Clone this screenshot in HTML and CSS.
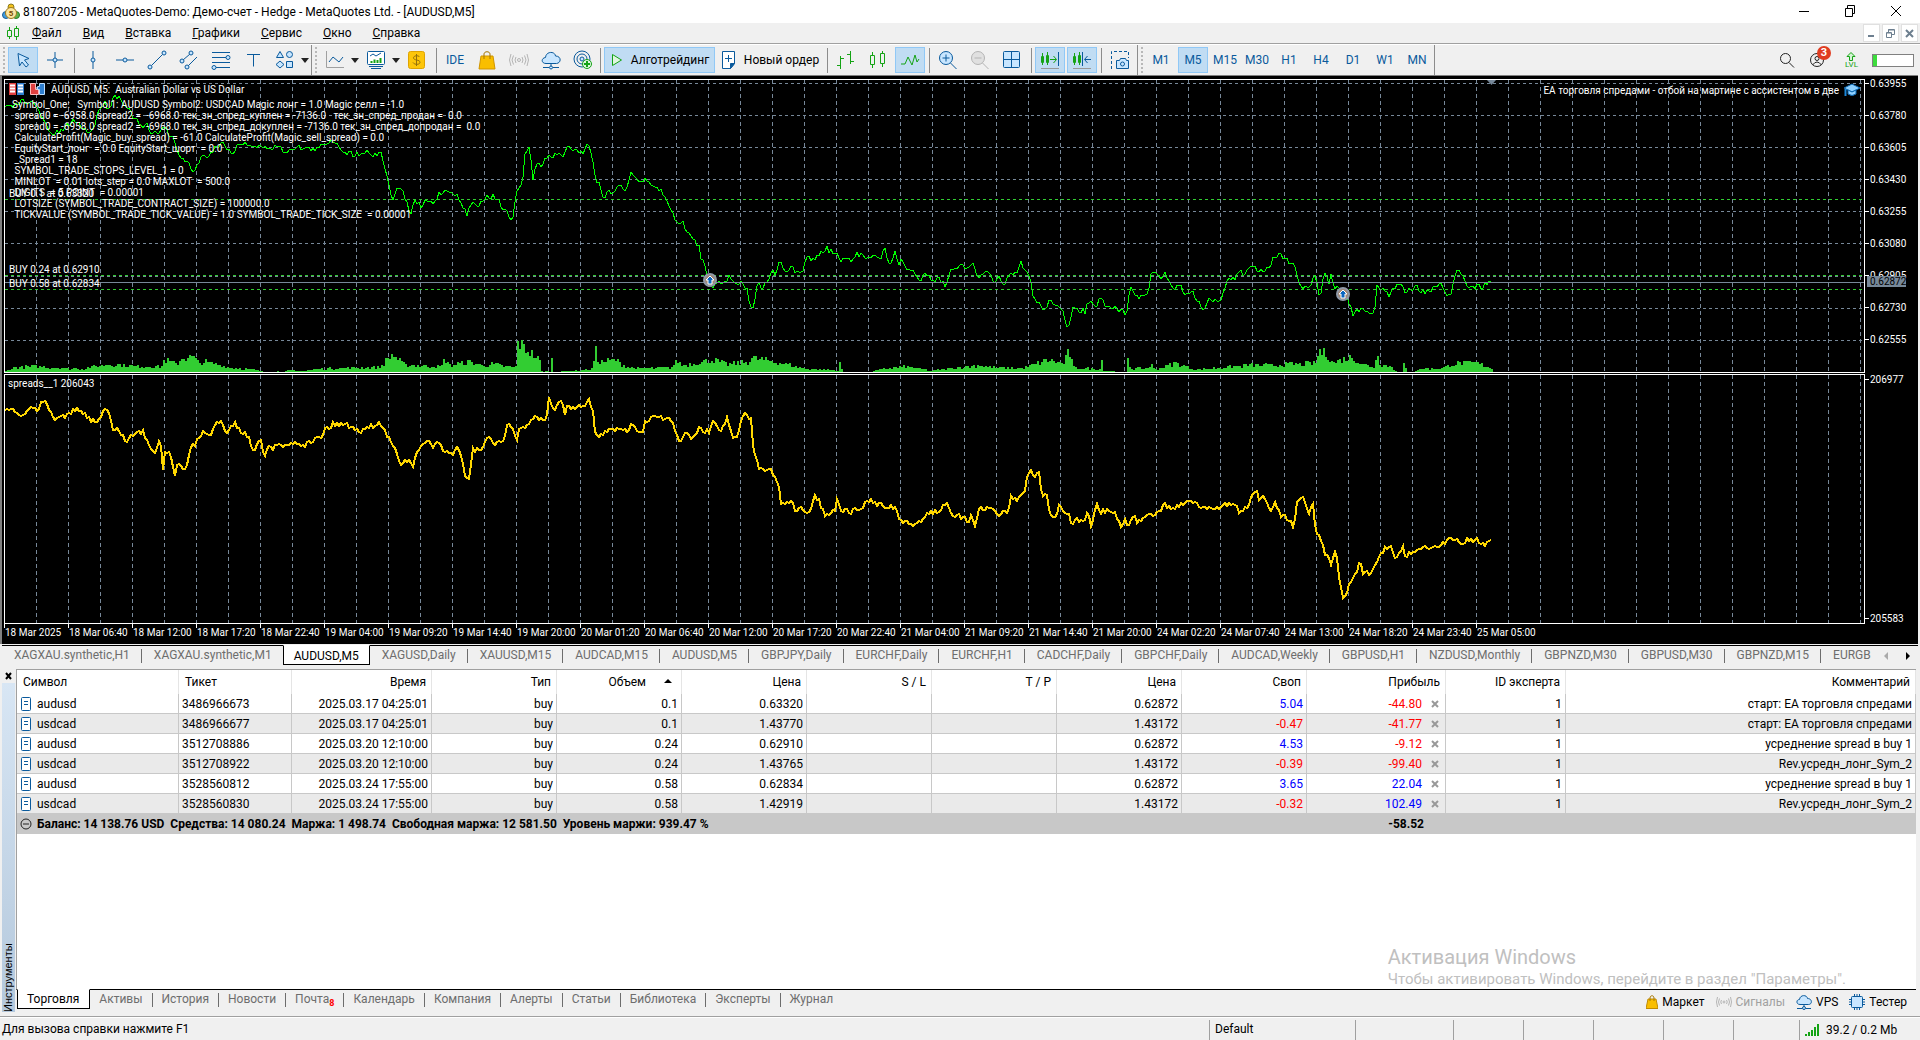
FILE: index.html
```html
<!DOCTYPE html>
<html lang="ru">

<head>
	<meta charset="UTF-8">
	<meta name="viewport" content="width=device-width, initial-scale=1">
	<title>81807205 - MetaQuotes-Demo: Демо-счет - Hedge - MetaQuotes Ltd. - [AUDUSD,M5]</title>
	<link rel="stylesheet" href="styles.css">
</head>

<body>
	<header class="titlebar">
		<svg class="logo" width="18" height="18" viewBox="0 0 18 18">
			<circle cx="9" cy="4" r="3" fill="#f5c21b" stroke="#8a7a20" />
			<circle cx="4" cy="12" r="3.5" fill="#3f9be0" stroke="#1c5f94" />
			<circle cx="14" cy="12" r="3.5" fill="#5ab34a" stroke="#2e7a25" />
			<circle cx="9" cy="10" r="5.5" fill="#fbe6a0" stroke="#a07b1c" />
			<text x="9" y="13" text-anchor="middle" class="logo-num">5</text>
		</svg>
		<span class="title">81807205 - MetaQuotes-Demo: Демо-счет - Hedge - MetaQuotes Ltd. - [AUDUSD,M5]</span>
		<div class="win-btns">
			<button aria-label="Свернуть"><svg width="12" height="12"><path d="M1 6.5h10" stroke="#000" /></svg></button>
			<button aria-label="Развернуть"><svg width="12" height="12" fill="none" stroke="#000"><path d="M1.500 3.500h7v8h-7zM3.500 3.500v-3h7v8h-2" /></svg></button>
			<button aria-label="Закрыть"><svg width="12" height="12"><path d="M1 1l10 10M11 1L1 11" stroke="#000" /></svg></button>
		</div>
	</header>

	<nav class="menubar">
		<svg width="14" height="14" fill="none" stroke="#14a314"><path d="M3.500 1v3M3.500 10v3M1.500 4.500h4v6h-4zM10.500 0v2M10.500 11v3M8.500 2.500h4v8h-4z" /></svg>
		<a href="#"><u>Ф</u>айл</a>
		<a href="#"><u>В</u>ид</a>
		<a href="#"><u>В</u>ставка</a>
		<a href="#"><u>Г</u>рафики</a>
		<a href="#"><u>С</u>ервис</a>
		<a href="#"><u>О</u>кно</a>
		<a href="#"><u>С</u>правка</a>
		<div class="mdi-btns">
			<button aria-label="Свернуть окно"><svg width="9" height="9"><path d="M1 7h6" stroke="#6d7f8f" stroke-width="2" /></svg></button>
			<button aria-label="Восстановить окно"><svg width="9" height="9" fill="none" stroke="#6d7f8f"><path d="M2.500 3V.5h6v5H6M.5 3.500h5v5h-5zM2 1h6M1 4h4" /></svg></button>
			<button aria-label="Закрыть окно"><svg width="9" height="9"><path d="M1 1l7 7M8 1L1 8" stroke="#6d7f8f" stroke-width="2" /></svg></button>
		</div>
	</nav>

	<div class="toolbar">
		<i class="grip"></i>
		<button class="tool on" aria-label="Курсор"><svg width="20" height="20" class="blue"><path d="M5 3.500l11 5-4.500 1.500 4 5-2.500 2-4-5L6.500 16z" class="fill" /></svg></button>
		<button class="tool" aria-label="Перекрестие"><svg width="20" height="20" class="blue"><path d="M10 2v6M10 12v6M2 10h6M12 10h6" /><circle cx="10" cy="10" r="2" class="fill" /></svg></button>
		<i class="sep"></i>
		<button class="tool" aria-label="Вертикальная линия"><svg width="20" height="20" class="blue"><path d="M10 1v7M10 12v7" /><circle cx="10" cy="10" r="2" class="fill" /></svg></button>
		<button class="tool" aria-label="Горизонтальная линия"><svg width="20" height="20" class="blue"><path d="M1 10h7M12 10h7" /><circle cx="10" cy="10" r="2" class="fill" /></svg></button>
		<button class="tool" aria-label="Трендовая линия"><svg width="20" height="20" class="blue"><path d="M4.500 15.500l11-11" /><circle cx="3" cy="17" r="2" class="fill" /><circle cx="17" cy="3" r="2" class="fill" /></svg></button>
		<button class="tool" aria-label="Канал"><svg width="20" height="20" class="blue"><path d="M4 10l7-6M9 16l9-9" /><circle cx="3" cy="11" r="2" class="fill" /><circle cx="12" cy="3" r="2" class="fill" /><circle cx="8" cy="17" r="2" class="fill" /></svg></button>
		<button class="tool" aria-label="Фибоначчи"><svg width="20" height="20" class="blue"><path d="M1 2.500h18M1 7.500h14M1 12.500h18M5 17.500h14" /><circle cx="17" cy="7.500" r="2" class="fill" /><circle cx="3" cy="17.500" r="2" class="fill" /></svg></button>
		<button class="tool" aria-label="Текст"><svg width="20" height="20" class="blue"><path d="M4 4.500h13M10.500 4.500v12" /></svg></button>
		<button class="tool" aria-label="Фигуры"><svg width="20" height="20" class="blue"><path d="M5 1.500l3.500 6h-7z" class="fill" /><circle cx="14.500" cy="4.500" r="3" class="fill" /><path d="M5 11l4 3.500L5 18l-4-3.500zM11.500 11.500h6v6h-6z" class="fill" /></svg></button>
		<button class="drop" aria-label="Ещё фигуры"></button>
		<i class="sep tall"></i><i class="grip"></i>
		<button class="tool" aria-label="Тип графика"><svg width="20" height="20" class="blue"><path d="M1.500 1v16.500H19" stroke="#a0a0a0" /><path d="M4 12l4-5 6 5 4-5" /></svg></button>
		<button class="drop" aria-label="Типы графика"></button>
		<button class="tool" aria-label="Индикаторы"><svg width="20" height="20" class="blue"><rect x="1.500" y="1.500" width="17" height="13" rx="1" fill="#fff" /><path d="M4 6l3-2 3 2 5-3" /><path d="M5.500 13v-2M8.500 13V9.500M11.500 13v-3M14.500 13V8" stroke="#14a314" stroke-width="2" /><path d="M3 16.500h14M5 18.500h10" /></svg></button>
		<button class="drop" aria-label="Список индикаторов"></button>
		<button class="tool" aria-label="Торговля"><svg width="20" height="20"><rect x="1.500" y="1.500" width="16" height="17" rx="2" fill="#fdc60a" stroke="#e0a400" /><path d="M9.500 4v12M12.500 7c-1-2-6-1.500-6 .8 0 3 6.500 1.500 6.500 4.500 0 2.500-5.500 2.800-7 .2" fill="none" stroke="#94700a" /></svg></button>
		<i class="sep"></i>
		<button class="tool tf">IDE</button>
		<button class="tool" aria-label="Маркет"><svg width="20" height="20"><path d="M4 6h12l2 13H2z" fill="#f9be00" stroke="#d09500" /><path d="M7 9V4c0-3 6-3 6 0v5" fill="none" stroke="#a67600" /></svg></button>
		<button class="tool" aria-label="Сигналы"><svg width="20" height="20" fill="none" stroke="#b4b4b4"><circle cx="10" cy="10" r="1.500" /><path d="M7 7q-2 3 0 6M13 7q2 3 0 6M4.500 5.500q-3 4.500 0 9M15.500 5.500q3 4.500 0 9M2 4q-3 6 0 12M18 4q3 6 0 12" /></svg></button>
		<button class="tool" aria-label="VPS"><svg width="20" height="20" class="blue"><path d="M5 13.500c-5 0-5-5.500-.5-6C5 1 14 1 14.500 6c6 0 6 7 1 7.500z" class="fill" /><path d="M10 13v3M2 17.500h6M12 17.500h6" /><circle cx="10" cy="17.500" r="1.500" class="fill" /></svg></button>
		<button class="tool" aria-label="Сообщество"><svg width="20" height="20" class="blue"><circle cx="9" cy="9" r="8" /><circle cx="9" cy="9" r="5" /><circle cx="9" cy="9" r="2" class="fill" /><circle cx="14" cy="14" r="4.500" fill="#dff5df" stroke="#14a314" /><path d="M14 11v6M11 14h6" stroke="#14a314" stroke-width="2" /></svg></button>
		<i class="sep tight"></i>
		<button class="tool wide on"><svg width="14" height="14"><path d="M2.500 1.500l9 5.500-9 5.500z" fill="#dff5df" stroke="#14a314" /></svg>Алготрейдинг</button>
		<button class="tool wide order"><svg width="16" height="20" class="blue"><path d="M1.500 1.500h12v12l-4 5h-8z" fill="#fff" /><path d="M13.500 13.500l-4 5v-5z" fill="#0a5a9c" /><path d="M7.500 5v7M4 8.500h7" /></svg>Новый ордер</button>
		<i class="sep"></i>
		<button class="tool" aria-label="Бары"><svg width="20" height="20" class="green"><path d="M4.500 6v13M1 15.500h3.500M4.500 8.500H8M14.500 1v13M11 4.500h3.500M14.500 11.500H18" /></svg></button>
		<button class="tool" aria-label="Свечи"><svg width="20" height="20" class="green"><path d="M4.500 2v3M4.500 15v3M2.500 5.500h4v9h-4zM14.500 1v2M14.500 14v3M12.500 3.500h4v10h-4z" /></svg></button>
		<button class="tool on" aria-label="Линия"><svg width="20" height="20" class="green"><path d="M1 14h4l3-7 4 8 3-10 2 7 2-3" /></svg></button>
		<i class="sep"></i>
		<button class="tool" aria-label="Увеличить"><svg width="20" height="20" class="blue"><circle cx="8" cy="8" r="6.500" class="fill" /><path d="M12.500 13l6 6M8 4.500v7M4.500 8h7" /></svg></button>
		<button class="tool" aria-label="Уменьшить"><svg width="20" height="20" fill="#e0e0e0" stroke="#b4b4b4"><circle cx="8" cy="8" r="6.500" /><path d="M12.500 13l6 6M4.500 8h7" /></svg></button>
		<button class="tool" aria-label="Сетка"><svg width="20" height="20" class="blue"><rect x="1.500" y="1.500" width="16" height="16" rx="1" class="fill" /><path d="M9.500 1.500v16M1.500 9.500h16" /></svg></button>
		<i class="sep"></i>
		<button class="tool on" aria-label="Автопрокрутка"><svg width="20" height="20" class="green"><path d="M2.500 3v12M1.500 6.500h2v6h-2zM7.500 2v13M6.500 5.500h2v7h-2zM10 9.500h6M13.500 6l3 3.500-3 3.500" /><path d="M18.500 2v14" stroke="#0a5a9c" /><path d="M1 18.500h18" stroke="#999" /></svg></button>
		<button class="tool on" aria-label="Сдвиг графика"><svg width="20" height="20" class="green"><path d="M2.500 3v12M1.500 6.500h2v6h-2zM7.500 2v13M6.500 5.500h2v7h-2z" /><path d="M10.500 2v14M19 9.500h-6M15.500 6l-3 3.500 3 3.500" stroke="#0a5a9c" /><path d="M1 18.500h18" stroke="#999" /></svg></button>
		<i class="sep"></i>
		<button class="tool" aria-label="Снимок"><svg width="20" height="20" class="blue"><path d="M1.500 19V1.500h17V8" stroke-dasharray="3 2" /><path d="M6.500 10.500h3l1-2h5l1 2h2v8h-12z" class="fill" /><circle cx="12.500" cy="14" r="2" /></svg></button>
		<i class="sep tall"></i><i class="grip"></i>
		<button class="tool tf">M1</button>
		<button class="tool tf on">M5</button>
		<button class="tool tf">M15</button>
		<button class="tool tf">M30</button>
		<button class="tool tf">H1</button>
		<button class="tool tf">H4</button>
		<button class="tool tf">D1</button>
		<button class="tool tf">W1</button>
		<button class="tool tf">MN</button>
		<i class="sep tall"></i>
		<div class="tool-right">
			<button aria-label="Поиск"><svg width="16" height="16" fill="none" stroke="#222"><circle cx="6.500" cy="6.500" r="5" /><path d="M10 10.500l5 5" /></svg></button>
			<button class="account" aria-label="Аккаунт"><svg width="16" height="16" fill="none" stroke="#222"><circle cx="8" cy="8" r="6.500" /><circle cx="8" cy="6.500" r="2" /><path d="M3.500 13q4.500-6 9 0" /></svg><b>3</b></button>
			<span class="lvl"><svg width="10" height="9" fill="#d4f5d4" stroke="#14a314"><path d="M5 .5l4 4H6.500v4h-3v-4H1z" /></svg>LVL</span>
			<span class="battery"><i></i></span>
		</div>
	</div>

	<main class="chart">
		<section class="plot price">
			<svg id="price"></svg>
			<div class="chart-title">
				<svg width="15" height="12"><path d="M0 0h7v12H0z" fill="#e04040" /><path d="M8 0h7v12H8z" fill="#2f7fd0" /><path d="M1 2.500h5M1 5.500h5M1 8.500h5M9 2.500h5M9 5.500h5M9 8.500h5" stroke="#fff" stroke-width="2" /></svg>
				<svg width="15" height="12"><path d="M.5.500h5v6h3v5h-8z" fill="#e04040" stroke="#fbb" /><path d="M9.500.500h5v11h-5v-5h-2v-3h2z" fill="#2f7fd0" stroke="#bdf" /></svg>
				<span>AUDUSD, M5:  Australian Dollar vs US Dollar</span>
			</div>
			<pre class="comment">Symbol_One:   Symbol1: AUDUSD Symbol2: USDCAD Magic лонг = 1.0 Magic селл = -1.0
 spread0 = -6958.0 spread2 =  -6968.0 тек_зн_спред_куплен = -7136.0   тек_зн_спред_продан =  0.0
 spread0 = -6958.0 spread2 =  -6968.0 тек_зн_спред_докуплен = -7136.0 тек_зн_спред_допродан =  0.0
 CalculateProfit(Magic_buy_spread) = -61.0 CalculateProfit(Magic_sell_spread) = 0.0
 EquityStart_лонг  = 0.0 EquityStart_шорт  = 0.0
 _Spread1 = 18
 SYMBOL_TRADE_STOPS_LEVEL_1 = 0
 MINLOT  = 0.01 lots_step = 0.0 MAXLOT  = 500.0
 DIGITS  = 5 POINT  = 0.00001
 LOTSIZE (SYMBOL_TRADE_CONTRACT_SIZE) = 100000.0
 TICKVALUE (SYMBOL_TRADE_TICK_VALUE) = 1.0 SYMBOL_TRADE_TICK_SIZE  = 0.00001</pre>
			<span class="order-label o1">BUY 0.1 at 0.63320</span>
			<span class="order-label o2">BUY 0.24 at 0.62910</span>
			<span class="order-label o3">BUY 0.58 at 0.62834</span>
			<div class="expert">EA торговля спредами - отбой на мартине с ассистентом в две
				<svg width="16" height="14"><path d="M8 1l8 4-8 4-8-4z" fill="#8fd0ff" stroke="#0a66b0" /><path d="M4 7v4q4 3 8 0V7L8 9z" fill="#8fd0ff" stroke="#0a66b0" /><path d="M1.500 6v7" stroke="#1b86d8" stroke-width="2" /></svg>
			</div>
		</section>
		<div class="axis price-axis">
			<span>0.63955</span><span>0.63780</span><span>0.63605</span><span>0.63430</span><span>0.63255</span><span>0.63080</span><span>0.62905</span><span>0.62730</span><span>0.62555</span>
			<b>0.62872</b>
		</div>
		<section class="plot spread">
			<svg id="spread"></svg>
			<span class="spread-label">spreads__1 206043</span>
		</section>
		<div class="axis spread-axis"><span>206977</span><span>205583</span></div>
		<div class="dates" id="dates"></div>
	</main>

	<nav class="chart-tabs">
		<a href="#">XAGXAU.synthetic,H1</a>
		<a href="#">XAGXAU.synthetic,M1</a>
		<a href="#" class="active">AUDUSD,M5</a>
		<a href="#">XAGUSD,Daily</a>
		<a href="#">XAUUSD,M15</a>
		<a href="#">AUDCAD,M15</a>
		<a href="#">AUDUSD,M5</a>
		<a href="#">GBPJPY,Daily</a>
		<a href="#">EURCHF,Daily</a>
		<a href="#">EURCHF,H1</a>
		<a href="#">CADCHF,Daily</a>
		<a href="#">GBPCHF,Daily</a>
		<a href="#">AUDCAD,Weekly</a>
		<a href="#">GBPUSD,H1</a>
		<a href="#">NZDUSD,Monthly</a>
		<a href="#">GBPNZD,M30</a>
		<a href="#">GBPUSD,M30</a>
		<a href="#">GBPNZD,M15</a>
		<a href="#">EURGB</a>
		<div class="tab-scroll">
			<button aria-label="Назад"><svg width="5" height="8"><path d="M5 0v8L1 4z" fill="#aaa" /></svg></button>
			<button aria-label="Вперёд"><svg width="5" height="8"><path d="M0 0v8l4-4z" fill="#000" /></svg></button>
		</div>
	</nav>

	<section class="terminal">
		<aside class="side">
			<button aria-label="Закрыть панель"><svg width="7" height="8"><path d="M1 1l5 6M6 1L1 7" stroke="#000" stroke-width="2" /></svg></button>
			<div class="side-title">Инструменты</div>
		</aside>
		<div class="panel">
			<div class="table-box">
				<table>
					<colgroup>
						<col class="c-sym"><col class="c-ticket"><col class="c-time"><col span="7" class="c-num"><col class="c-profit"><col class="c-id"><col>
					</colgroup>
					<thead>
						<tr>
							<th class="l">Символ</th>
							<th class="l">Тикет</th>
							<th>Время</th>
							<th>Тип</th>
							<th class="sorted">Объем<svg width="8" height="4"><path d="M0 4h8L4 0z" /></svg></th>
							<th>Цена</th>
							<th>S / L</th>
							<th>T / P</th>
							<th>Цена</th>
							<th>Своп</th>
							<th>Прибыль</th>
							<th>ID эксперта</th>
							<th>Комментарий</th>
						</tr>
					</thead>
					<tbody id="rows"></tbody>
					<tfoot>
						<tr>
							<td colspan="10" class="l"><svg width="12" height="16" fill="none" stroke="#222"><circle cx="6" cy="8" r="5" /><path d="M3 8h6" /></svg>Баланс: 14 138.76 USD&nbsp; Средства: 14 080.24&nbsp; Маржа: 1 498.74&nbsp; Свободная маржа: 12 581.50&nbsp; Уровень маржи: 939.47 %</td>
							<td class="profit">-58.52</td>
							<td colspan="2"></td>
						</tr>
					</tfoot>
				</table>
				<div class="activation">
					<p class="big">Активация Windows</p>
					<p>Чтобы активировать Windows, перейдите в раздел "Параметры".</p>
				</div>
			</div>
			<nav class="panel-tabs">
				<a href="#" class="active">Торговля</a>
				<a href="#">Активы</a>
				<a href="#">История</a>
				<a href="#">Новости</a>
				<a href="#">Почта<sub>8</sub></a>
				<a href="#">Календарь</a>
				<a href="#">Компания</a>
				<a href="#">Алерты</a>
				<a href="#">Статьи</a>
				<a href="#">Библиотека</a>
				<a href="#">Эксперты</a>
				<a href="#">Журнал</a>
				<div class="services">
					<button><svg width="12" height="14"><path d="M2 4h8l2 9.500H0z" fill="#f9be00" stroke="#c08a00" /><path d="M4 6V3c0-3 4-3 4 0v3" fill="none" stroke="#a67600" /></svg>Маркет</button>
					<button class="off"><svg width="16" height="12" fill="none" stroke="#b4b4b4"><circle cx="8" cy="6" r="1" /><path d="M5.500 4q-1.500 2 0 4M10.500 4q1.500 2 0 4M3.500 2.500q-2 3.500 0 7M12.500 2.500q2 3.500 0 7M1.500 1q-2 5 0 10M14.500 1q2 5 0 10" /></svg>Сигналы</button>
					<button><svg width="16" height="16" class="blue"><path d="M4 10.500c-4 0-4-5-.5-5C4 .5 11 .5 11.500 4.500c5 0 5 6 1 6z" class="fill" /><path d="M8 10v3M1 14.500h5M10 14.500h5" /><circle cx="8" cy="14" r="1.500" class="fill" /></svg>VPS</button>
					<button><svg width="16" height="16" class="blue"><path d="M5.500 0v16M8 0v16M10.500 0v16M0 5.500h16M0 8h16M0 10.500h16" /><rect x="2.500" y="2.500" width="11" height="11" rx="1" class="fill" /></svg>Тестер</button>
				</div>
			</nav>
		</div>
	</section>

	<footer class="status">
		<span class="help">Для вызова справки нажмите F1</span>
		<span class="s146">Default</span><span class="s98"></span><span class="s70"></span><span class="s70"></span><span class="s70"></span><span class="s70"></span><span class="s66"></span>
		<span class="net"><svg width="15" height="12" stroke="#14a314" stroke-width="2"><path d="M1 12v-2M4 12V8M7 12V6M10 12V3M13 12V0" /></svg>39.2 / 0.2 Mb</span>
	</footer>

	<script src="chart.js"></script>
</body>

</html>
```
FILE: styles.css
```css
* {
	box-sizing: border-box;
}

body {
	margin: 0;
	height: 100vh;
	display: flex;
	flex-direction: column;
	background: #f0f0f0;
	color: #000;
	font-family: Roboto, "Open Sans", sans-serif;
	font-size: 12px;
	line-height: 16px;
	overflow: hidden;
}

a {
	color: inherit;
	text-decoration: none;
}

button {
	border: 0;
	padding: 0;
	margin: 0;
	background: none;
	font: inherit;
	color: inherit;
	display: flex;
	align-items: center;
	justify-content: center;
}

svg {
	flex: none;
}

.blue {
	fill: none;
	stroke: #0a5a9c;
}

.green {
	fill: none;
	stroke: #14a314;
}

.fill {
	fill: #c8e6ff;
}

/* title and menu */

.titlebar {
	display: flex;
	align-items: center;
	height: 23px;
	padding-left: 2px;
	background: #fff;
}

.logo-num {
	font: bold 8px Roboto, sans-serif;
	fill: #7a4a00;
}

.title {
	padding-left: 3px;
}

.win-btns {
	display: flex;
	gap: 34px;
	margin-left: auto;
	padding: 0 18px 2px 0;
}

.menubar {
	display: flex;
	align-items: center;
	height: 21px;
	padding: 0 2px 0 6px;
	border-bottom: 1px solid #a0a0a0;
}

.menubar a {
	padding-left: 21px;
}

.menubar svg + a {
	padding-left: 12px;
}

.mdi-btns {
	display: flex;
	gap: 2px;
	margin-left: auto;
}

.mdi-btns button {
	width: 17px;
	height: 18px;
	background: #fff;
	border: 1px solid #e0e0e0;
}

/* toolbar */

.toolbar {
	display: flex;
	align-items: center;
	gap: 2px;
	height: 31px;
	padding: 0 6px 0 2px;
	border-top: 1px solid #fff;
	white-space: nowrap;
}

.grip {
	width: 2px;
	height: 26px;
	margin: 0 1px;
	background: repeating-linear-gradient(#b8b8b8 0 2px, transparent 2px 4px);
}

.sep {
	width: 1px;
	height: 25px;
	margin: 0 1px 0 2px;
	background: #8c8c8c;
}

.sep.tight {
	margin: 0 1px 0 0;
}

.sep.tall {
	height: 30px;
	margin: 0;
}

.tool {
	width: 30px;
	height: 26px;
	flex: none;
	border: 1px solid transparent;
}

.tool.on {
	background: #c0dcf3;
	border-color: #90c8f6;
}

.tool.tf {
	color: #0a5a9c;
}

.tool.wide {
	width: 111px;
	gap: 7px;
}

.tool.order {
	width: 106px;
}

.drop {
	width: 9px;
	height: 26px;
	margin-left: -2px;
	flex: none;
}

.drop::before {
	content: "";
	border: 4px solid transparent;
	border-top: 5px solid #222;
	border-bottom: 0;
}

.tool-right {
	display: flex;
	align-items: center;
	gap: 14px;
	margin-left: auto;
}

.account {
	position: relative;
	width: 22px;
	justify-content: flex-start;
}

.account b {
	position: absolute;
	right: 0;
	top: -6px;
	width: 14px;
	height: 14px;
	border-radius: 7px;
	background: #e03c20;
	color: #fff;
	font-size: 11px;
	line-height: 14px;
}

.lvl {
	display: flex;
	flex-direction: column;
	align-items: center;
	color: #14a314;
	font-size: 8px;
	line-height: 8px;
}

.battery {
	width: 42px;
	height: 13px;
	border: 1px solid #808080;
	background: #fff;
	display: flex;
}

.battery i {
	width: 4px;
	background: #3ddc3d;
}

/* chart */

.chart {
	display: grid;
	grid-template-columns: 1fr 52px;
	grid-template-rows: 295px 250px 20px;
	padding: 3px 1px 0 4px;
	margin-right: 2px;
	background: #000;
	border-top: 1px solid #808080;
	box-shadow: inset 2px 0 #808080;
	color: #fff;
	font-size: 10px;
	line-height: 11px;
}

.plot {
	position: relative;
	border: 1px solid #fff;
	overflow: hidden;
}

.plot > svg {
	display: block;
	width: 100%;
	height: 100%;
}

.price {
	margin-bottom: 1px;
}

.chart-title {
	position: absolute;
	left: 4px;
	top: 3px;
	display: flex;
	align-items: center;
	gap: 6px;
	white-space: pre;
}

.comment {
	position: absolute;
	left: 7px;
	top: 19px;
	margin: 0;
	font: inherit;
}

.order-label {
	position: absolute;
	left: 4px;
}

.o1 {
	top: 108px;
}

.o2 {
	top: 184px;
}

.o3 {
	top: 198px;
}

.expert {
	position: absolute;
	right: 4px;
	top: 3px;
	display: flex;
	align-items: center;
	gap: 5px;
}

.spread-label {
	position: absolute;
	left: 3px;
	top: 3px;
}

.axis {
	position: relative;
	display: flex;
	flex-direction: column;
}

.axis span {
	display: flex;
	align-items: center;
	height: 32px;
}

.axis span::before {
	content: "";
	width: 4px;
	margin-right: 1px;
	border-top: 1px solid #fff;
}

.price-axis {
	margin-top: -12px;
}

.price-axis b {
	position: absolute;
	left: 2px;
	top: 209px;
	width: 39px;
	padding-left: 3px;
	background: #778899;
	color: #000;
	font-weight: normal;
}

.spread-axis {
	justify-content: space-between;
}

.spread-axis span {
	height: 11px;
}

.dates {
	grid-column: 1 / 3;
	display: flex;
	overflow: hidden;
	white-space: nowrap;
}

.dates span {
	flex: none;
	width: 64px;
	height: 4px;
	padding-top: 3px;
	border-left: 1px solid #fff;
}

/* chart tabs */

.chart-tabs {
	display: flex;
	flex: none;
	height: 21px;
	margin: 1px 2px 0;
	border-top: 1px solid #000;
	color: #6d6d6d;
	white-space: nowrap;
}

.chart-tabs a,
.panel-tabs a {
	position: relative;
	padding: 1px 12px 0;
}

.chart-tabs a::after,
.panel-tabs a::after {
	content: "";
	position: absolute;
	right: 0;
	top: 3px;
	width: 1px;
	height: 14px;
	background: #6d6d6d;
}

.chart-tabs .active,
.panel-tabs .active {
	margin: -1px 0 0 -1px;
	padding-top: 2px;
	height: 20px;
	background: #fff;
	border: 1px solid #000;
	border-top-color: #fff;
	color: #000;
}

.chart-tabs .active {
	padding: 2px 10px 0;
}

a.active::after,
.chart-tabs a:nth-last-child(2)::after,
.panel-tabs a:nth-last-child(2)::after {
	display: none;
}

.tab-scroll {
	display: flex;
	gap: 18px;
	margin-left: auto;
	padding-right: 10px;
}

/* terminal */

.terminal {
	flex: 1;
	min-height: 0;
	display: flex;
	margin-top: 3px;
	border-bottom: 1px solid #a0a0a0;
}

.side {
	width: 16px;
	display: flex;
	flex-direction: column;
	align-items: center;
	padding-bottom: 4px;
}

.side button {
	height: 14px;
}

.side-title {
	flex: 1;
	width: 13px;
	writing-mode: vertical-rl;
	transform: rotate(180deg);
	background: linear-gradient(#b4c8dc, #d8e6f4);
	font-family: "Liberation Sans", Arial, sans-serif;
	font-size: 11px;
	line-height: 13px;
}

.panel {
	flex: 1;
	min-width: 0;
	display: flex;
	flex-direction: column;
	padding-right: 4px;
}

.table-box {
	flex: 1;
	position: relative;
	background: #fff;
	border-top: 1px solid #a0a0a0;
	border-left: 1px solid #a0a0a0;
	border-bottom: 1px solid #000;
}

table {
	width: 100%;
	table-layout: fixed;
	border-collapse: separate;
	border-spacing: 0;
}

.c-sym {
	width: 162px;
}

.c-ticket {
	width: 113px;
}

.c-time {
	width: 140px;
}

.c-num {
	width: 125px;
}

.c-profit {
	width: 139px;
}

.c-id {
	width: 120px;
}

th {
	height: 24px;
	padding: 0 5px 0 6px;
	font-weight: normal;
	text-align: right;
	border-right: 1px solid #e5e5e5;
}

th.sorted svg {
	margin: 0 4px 3px 18px;
}

td {
	height: 20px;
	padding: 0 3px;
	text-align: right;
	white-space: nowrap;
	border-right: 1px solid #c8c8c8;
	border-bottom: 1px solid #c8c8c8;
}

.l {
	text-align: left;
}

td svg {
	vertical-align: top;
}

tbody tr:nth-child(even) {
	background: #eaeaea;
}

tbody td:first-child svg,
tfoot .l svg {
	margin-right: 5px;
}

td button {
	display: inline-flex;
	margin: 0 3px 0 9px;
}

.pos {
	color: #00f;
}

.neg {
	color: #f00;
}

tfoot td {
	background: #c8c8c8;
	font-weight: bold;
}

tfoot .profit {
	padding-right: 21px;
}

.activation {
	position: absolute;
	right: 70px;
	bottom: 0;
	color: #c0c0c0;
	font-size: 15px;
	line-height: 20px;
}

.activation p {
	margin: 0;
}

.activation .big {
	font-size: 20px;
	line-height: 24px;
}

.panel-tabs {
	display: flex;
	height: 26px;
	color: #6d6d6d;
}

.panel-tabs a {
	padding: 1px 10px 0 9px;
}

.panel-tabs .active {
	margin-left: 1px;
	padding-top: 1px;
}

.panel-tabs sub {
	color: #f00;
	font-size: 9px;
	font-weight: bold;
	line-height: 9px;
}

.services {
	display: flex;
	gap: 11px;
	margin-left: auto;
	padding: 0 9px 3px 0;
	color: #000;
}

.services button {
	gap: 4px;
}

.services .off {
	color: #a0a0a0;
}

/* status bar */

.status {
	display: flex;
	height: 23px;
	border-top: 1px solid #fff;
}

.status span {
	border-left: 1px solid #a0a0a0;
	margin-top: 2px;
	padding-left: 5px;
	line-height: 19px;
}

.status .help {
	flex: 1;
	border: 0;
	padding-left: 2px;
}

.s146 {
	width: 146px;
}

.s98 {
	width: 98px;
}

.s70 {
	width: 70px;
}

.s66 {
	width: 66px;
}

.net {
	width: 121px;
	display: flex;
	align-items: center;
	gap: 6px;
}
```
FILE: chart.js
```js
var NS = 'http://www.w3.org/2000/svg';

// each block: [x origin, y origin, x units per px, y units per px, points]
var priceData = [
	[0, 0, 2.45, 3, '12,325 30,320 50,305 70,300 85,315 100,345 120,395 135,402 155,390 180,360 200,378 220,400 235,365 245,315 258,310 265,325 283,285 300,300 320,340 345,380 360,378 370,403 385,400 400,375 412,400 425,420 437,460 450,480 465,495 475,518 490,475 510,463 530,440 545,430 555,438 567,462 580,440 600,425 625,440 650,443 680,440 700,455 720,440 750,445 775,448 815,418 830,435 845,455 870,465 890,452 915,465 935,452 940,500 950,530 960,600 970,575 983,557 990,590 1005,640 1020,600 1030,625 1045,600 1060,610 1080,575 1108,570 1125,600 1143,645 1160,600 1175,615 1190,588 1220,592 1235,632 1257,658 1265,575 1280,545 1285,470 1297,440 1305,535 1315,490 1325,500 1340,470 1380,465 1390,435 1425,460 1442,428 1453,480 1460,560 1470,545 1475,605 1485,580 1500,580 1515,550 1530,570 1548,520 1565,545 1577,540 1595,558 1620,570 1634,606 1656,660 1673,672'],
	[640, 240, 2.45, 3, '130,0 145,15 150,60 160,75 165,105 175,145 190,120 210,125 220,110 235,130 250,125 262,150 268,195 280,200 288,125 300,140 315,115 325,85 332,110 340,60 355,90 375,85 388,105 400,85 412,50 425,60 455,25 480,40 493,68 505,50 517,72 530,42 575,48 587,60 600,30 612,72 625,42 632,75 640,60 655,85 670,95 683,125 700,95 720,120 735,118 747,135 765,85 790,68 802,95 815,70 830,115 855,95 867,138 880,115 890,128 905,108 925,100 933,72 945,95 957,120 965,175 975,190 992,210 1002,180 1010,190 1020,185 1035,210 1045,270 1053,255 1062,200 1090,215 1103,175 1112,205 1127,180 1140,195 1157,212 1165,200 1173,210 1193,220 1197,160 1205,140 1215,170 1228,175 1243,155 1252,110 1265,95 1275,115 1288,100 1308,150 1317,125 1330,150 1343,170 1352,145 1368,190 1383,205 1393,175 1402,188 1425,170 1440,120 1460,115 1470,92 1480,110 1500,68 1510,85 1535,90 1550,60 1565,38'],
	[1280, 70, 2.45, 2.657, '0,495 15,505 35,520 45,570 65,583 85,548 97,600 110,538 120,565 125,548 135,580 150,575 165,600 178,650 198,635 210,650 232,645 236,575 250,580 270,598 288,565 300,570 305,595 335,575 345,588 370,585 395,572 407,600 420,590 430,535 440,535 455,565 475,580 485,565 493,583 505,565 515,555 519,568']
];

var spreadData = [
	[0, 220, 2.45, 3, '12,577 30,568 50,587 70,575 80,560 95,570 103,545 115,547 130,597 150,588 170,585 185,568 205,582 235,608 247,585 260,565 268,580 278,640 290,625 308,665 330,640 350,635 368,680 380,695 390,658 395,680 398,775 402,695 418,697 428,768 437,725 457,750 465,690 485,660 497,632 515,645 525,610 545,608 555,640 577,608 590,635 605,645 622,693 638,645 648,720 655,675 668,688 680,675 700,680 720,665 745,675 765,665 775,648 790,648 797,625 820,612 850,610 860,625 885,632 895,620 935,612 950,650 965,680 982,730 1000,720 1013,735 1025,690 1047,658 1062,685 1075,665 1085,695 1108,700 1120,680 1130,710 1142,780 1152,770 1157,690 1180,688 1195,650 1208,670 1235,660 1245,608 1260,640 1265,680 1270,620 1290,620 1310,590 1338,600 1345,533 1352,568 1378,545 1383,595 1388,560 1435,563 1442,530 1452,570 1458,640 1475,650 1490,628 1540,635 1550,610 1565,635'],
	[640, 240, 2.45, 3, '0,580 8,578 14,540 35,530 80,542 90,590 102,613 112,570 125,595 148,560 155,575 170,575 180,535 195,575 205,560 213,535 228,590 237,600 250,530 260,522 273,540 277,615 290,680 300,690 320,680 328,715 340,735 347,800 362,778 378,795 381,835 388,800 417,820 427,762 440,785 445,810 455,825 478,812 484,768 495,820 505,795 515,820 545,800 560,780 610,805 625,800 635,845 668,855 690,840 710,815 735,815 750,785 765,820 795,835 802,855 810,825 820,860 832,800 870,815 878,835 888,805 902,830 907,770 925,780 935,755 942,770 945,730 955,690 968,715 977,688 985,765 998,760 1003,825 1020,830 1027,795 1040,820 1050,815 1058,858 1068,835 1085,848 1097,815 1104,860 1120,795 1130,815 1163,815 1172,845 1182,865 1190,820 1196,872 1205,825 1220,845 1250,825 1270,820 1285,795 1308,805 1325,790 1355,785 1380,808 1420,800 1455,790 1468,818 1490,800 1500,770 1512,755 1518,780 1527,762 1535,785 1545,808 1555,785 1565,812'],
	[1280, 70, 2.45, 2.657, '0,1180 15,1190 35,1212 42,1145 60,1140 70,1180 82,1155 88,1240 95,1235 110,1285 125,1310 137,1270 147,1365 157,1410 170,1365 180,1340 187,1335 195,1298 203,1335 225,1340 235,1310 258,1265 272,1270 283,1305 302,1262 305,1300 325,1275 345,1270 390,1272 400,1255 415,1247 440,1250 448,1262 457,1247 475,1255 485,1247 493,1262 519,1250']
];

// volumes: y is the bar height
var volumeData = [
	[0, 0, 2.45, 1, '12,2 35,5 85,6 120,5 170,4 200,4 265,8 330,6 395,6 400,12 430,8 445,14 472,14 485,9 500,10 540,7 560,5 620,3 650,1 670,1 700,2 740,2 790,4 930,5 945,12 960,17 975,12 990,7 1080,6 1088,13 1100,7 1145,10 1180,7 1205,8 1255,5 1262,6 1266,28 1285,22 1305,16 1320,12 1325,2 1345,1 1350,12 1355,1 1440,3 1451,4 1456,23 1461,12 1475,10 1505,12 1530,6 1565,4'],
	[640, 0, 2.45, 1, '0,4 75,5 90,11 100,7 150,10 175,12 210,8 265,10 271,14 300,12 345,9 400,4 470,3 484,2 489,11 494,1 560,1 600,4 650,6 710,2 780,5 830,7 860,5 930,4 975,9 1000,12 1035,8 1042,14 1049,20 1060,5 1100,4 1124,3 1129,12 1134,2 1170,1 1189,1 1194,17 1199,4 1240,4 1250,8 1258,3 1310,9 1360,3 1490,7 1565,7'],
	[1280, 0, 2.45, 1, '0,8 50,8 85,9 95,20 115,16 130,9 155,13 178,14 200,8 231,5 236,23 243,8 270,6 285,1 298,1 303,10 308,1 325,1 345,4 390,4 430,9 480,9 515,5 519,3']
];

var seed = 7;
function rnd() {
	seed = (seed * 16807) % 2147483647;
	return seed / 2147483647 - 0.5;
}

function unpack(blocks) {
	var out = [];
	blocks.forEach(function (b) {
		b[4].split(' ').forEach(function (p) {
			var c = p.split(',');
			out.push([b[0] + c[0] / b[2], b[1] + c[1] / b[3]]);
		});
	});
	return out;
}

// one value per bar (2px), with a little tick noise between the points
function bars(points, noise) {
	var out = [];
	var i = 0;
	for (var x = 5; x <= 1492; x += 2) {
		while (i < points.length - 2 && points[i + 1][0] < x) i++;
		var a = points[i], b = points[i + 1];
		var t = Math.min(1, Math.max(0, (x - a[0]) / (b[0] - a[0])));
		out.push([x, a[1] + (b[1] - a[1]) * t + rnd() * noise]);
	}
	return out;
}

function add(svg, tag, attrs) {
	var el = document.createElementNS(NS, tag);
	for (var k in attrs) el.setAttribute(k, attrs[k]);
	svg.appendChild(el);
	return el;
}

function line(svg, x1, y1, x2, y2, color, dash) {
	add(svg, 'line', { x1: x1, y1: y1, x2: x2, y2: y2, stroke: color, 'stroke-dasharray': dash || 'none' });
}

function grid(svg, levels) {
	for (var x = 31; x < svg.clientWidth; x += 32)
		line(svg, x + 0.5, 0, x + 0.5, '100%', '#778899', '4 3');
	levels.forEach(function (y) {
		line(svg, 0, y + 0.5, '100%', y + 0.5, '#778899', '3 3');
	});
}

function curve(svg, points, dx, dy, color, width) {
	var d = points.map(function (p) {
		return (p[0] - dx).toFixed(0) + ',' + (p[1] - dy).toFixed(0);
	}).join(' ');
	add(svg, 'polyline', { points: d, fill: 'none', stroke: color, 'stroke-width': width, 'shape-rendering': 'crispEdges' });
}

function marker(svg, x, y) {
	add(svg, 'circle', { cx: x, cy: y, r: 6, fill: '#a08878', stroke: '#909aa8', 'stroke-width': 2 });
	add(svg, 'path', { d: 'M' + x + ' ' + (y - 4) + 'l4 4h-2v4h-4v-4h-2z', fill: '#0a66c0', stroke: '#fff' });
}

function draw() {
	seed = 7;
	var price = document.getElementById('price');
	var spread = document.getElementById('spread');
	price.innerHTML = spread.innerHTML = '';

	grid(price, [3, 35, 67, 99, 131, 163, 196, 228, 260]);
	var d = '';
	bars(unpack(volumeData), 0).forEach(function (p) {
		var h = Math.max(1, Math.round(p[1] * (1.1 + rnd() * 0.6)));
		d += 'M' + (p[0] - 5) + ' 293v-' + h + 'h2v' + h + 'z';
	});
	add(price, 'path', { d: d, fill: '#32cd32', 'shape-rendering': 'crispEdges' });
	curve(price, bars(unpack(priceData), 6), 5, 80, '#00ff00', 1);
	[119, 195, 209].forEach(function (y) {
		line(price, 0, y + 0.5, '100%', y + 0.5, '#32cd32', '3 3');
	});
	line(price, 0, 202.5, '100%', 202.5, '#778899');
	marker(price, 705, 200);
	marker(price, 1338, 214);
	add(price, 'path', { d: 'M1482 0h9l-4.500 5z', fill: '#778899' });

	grid(spread, []);
	curve(spread, bars(unpack(spreadData), 5), 5, 375, '#ffd700', 2);
}

var dates = ['18 Mar 2025', '18 Mar 06:40', '18 Mar 12:00', '18 Mar 17:20', '18 Mar 22:40', '19 Mar 04:00', '19 Mar 09:20', '19 Mar 14:40', '19 Mar 20:00', '20 Mar 01:20', '20 Mar 06:40', '20 Mar 12:00', '20 Mar 17:20', '20 Mar 22:40', '21 Mar 04:00', '21 Mar 09:20', '21 Mar 14:40', '21 Mar 20:00', '24 Mar 02:20', '24 Mar 07:40', '24 Mar 13:00', '24 Mar 18:20', '24 Mar 23:40', '25 Mar 05:00'];
document.getElementById('dates').innerHTML = dates.map(function (t) {
	return '<span>' + t + '</span>';
}).join('');

var trades = [
	['audusd', '3486966673', '2025.03.17 04:25:01', '0.1', '0.63320', '0.62872', '5.04', '-44.80', 'старт: EA торговля спредами'],
	['usdcad', '3486966677', '2025.03.17 04:25:01', '0.1', '1.43770', '1.43172', '-0.47', '-41.77', 'старт: EA торговля спредами'],
	['audusd', '3512708886', '2025.03.20 12:10:00', '0.24', '0.62910', '0.62872', '4.53', '-9.12', 'усреднение spread в buy 1'],
	['usdcad', '3512708922', '2025.03.20 12:10:00', '0.24', '1.43765', '1.43172', '-0.39', '-99.40', 'Rev.усредн_лонг_Sym_2'],
	['audusd', '3528560812', '2025.03.24 17:55:00', '0.58', '0.62834', '0.62872', '3.65', '22.04', 'усреднение spread в buy 1'],
	['usdcad', '3528560830', '2025.03.24 17:55:00', '0.58', '1.42919', '1.43172', '-0.32', '102.49', 'Rev.усредн_лонг_Sym_2']
];
var doc = '<svg width="12" height="16" fill="#fff" stroke="#0a5a9c"><rect x="1.500" y="1.500" width="9" height="13" rx="1"/><path d="M4 5.500h4M4 8.500h4"/></svg>';
var cross = '<button aria-label="Закрыть позицию"><svg width="8" height="8"><path d="M1 1l6 6M7 1L1 7" stroke="#999" stroke-width="2"/></svg></button>';

function sign(v) {
	return v < 0 ? 'neg' : 'pos';
}

document.getElementById('rows').innerHTML = trades.map(function (t) {
	return '<tr><td class="l">' + doc + t[0] + '</td><td class="l">' + t[1] + '</td><td>' + t[2] + '</td><td>buy</td><td>' + t[3] +
		'</td><td>' + t[4] + '</td><td></td><td></td><td>' + t[5] + '</td><td class="' + sign(t[6]) + '">' + t[6] +
		'</td><td class="' + sign(t[7]) + '">' + t[7] + cross + '</td><td>1</td><td>' + t[8] + '</td></tr>';
}).join('');

draw();
window.addEventListener('resize', draw);
```
